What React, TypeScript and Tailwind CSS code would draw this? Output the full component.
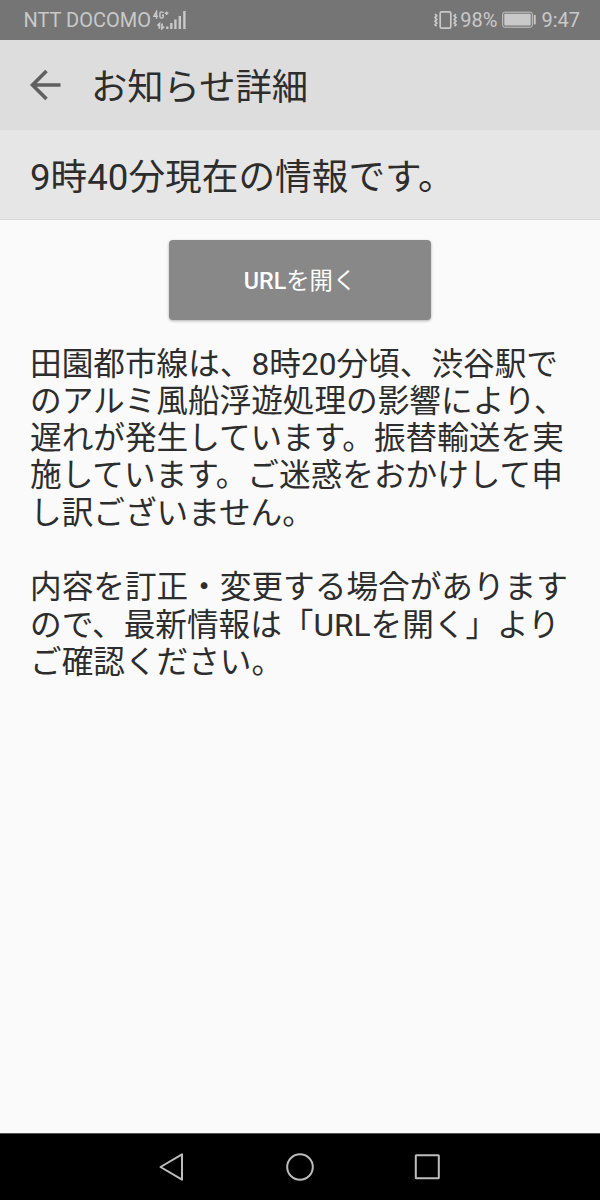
const DETAILS = [
  "田園都市線は、8時20分頃、渋谷駅で",
  "のアルミ風船浮遊処理の影響により、",
  "遅れが発生しています。振替輸送を実",
  "施しています。ご迷惑をおかけして申",
  "し訳ございません。",
  "",
  "内容を訂正・変更する場合があります",
  "ので、最新情報は「URLを開く」より",
  "ご確認ください。",
];

function SignalIcon() {
  return (
    <svg className="mt-px ml-[2.5px] h-[22px] w-[36px] shrink-0" viewBox="0 0 36 22" fill="none" stroke="#c9c9c9">
      <path d="M3.5 8.8V1.5L0.8 6.2H5M10.3 3.2C10.1 1.4 6.9 1.4 6.9 3.2V6.4C6.9 8.6 10.3 8.6 10.3 6.4V5.2H8.9M11.8 3.2H15.4M13.6 1.4V5" strokeWidth="1.4" />
      <path d="M6.4 18.8V13.8L4.4 15.6M9 13.6V18.4L11 16.6" strokeWidth="1.8" />
      <path d="M14.3 19V16.6M18.3 19V13M22.4 19V9.6M26.8 19V6M31.4 19V1" strokeWidth="2.4" />
    </svg>
  );
}

function VibrateIcon() {
  return (
    <svg className="h-[20px] w-[25px]" viewBox="0 0 25 20" fill="none" stroke="#c9c9c9">
      <rect x="7.2" y="1.8" width="10.6" height="16.4" rx="1.5" strokeWidth="1.7" />
      <path d="M2 4L3.8 5.8L2 7.6L3.8 9.4L2 11.2L3.8 13L2 14.8L3.6 16.2M23 4L21.2 5.8L23 7.6L21.2 9.4L23 11.2L21.2 13L23 14.8L21.4 16.2" strokeWidth="1.7" />
    </svg>
  );
}

function BatteryIcon() {
  return (
    <svg className="ml-[5px] h-[18px] w-[36px]" viewBox="0 0 36 18">
      <rect x="0.7" y="1.2" width="29.6" height="15" rx="2" fill="none" stroke="#c9c9c9" strokeWidth="1" />
      <rect x="2.3" y="2.8" width="26.4" height="11.8" rx="0.8" fill="#c9c9c9" />
      <rect x="31.8" y="4" width="1.9" height="9.4" rx="0.6" fill="#c9c9c9" />
    </svg>
  );
}

export default function App() {
  return (
    <div className="flex h-[1200px] w-[600px] flex-col overflow-hidden bg-[#fafafa] font-[Roboto,'Noto_Sans_CJK_JP',sans-serif] text-[#2d2d2d]" lang="ja">
      <header className="flex h-10 shrink-0 items-center bg-[#757575] pr-[20px] pl-[23.5px] text-[20px] text-[#c9c9c9]">
        <span className="whitespace-nowrap">NTT DOCOMO</span>
        <SignalIcon />
        <div className="ml-auto flex items-center whitespace-nowrap">
          <VibrateIcon />
          <span className="ml-[2.5px]">98%</span>
          <BatteryIcon />
          <span className="ml-[3px]">9:47</span>
        </div>
      </header>

      <div className="flex h-[90px] shrink-0 items-center bg-[#dddddd] pl-[29px]">
        <button aria-label="戻る">
          <svg className="h-8 w-8" viewBox="0 0 32 32" fill="none" stroke="#606060" strokeWidth="3.6">
            <path d="M31.5 16H3.4M17.5 2L3.5 16L17.5 30" />
          </svg>
        </button>
        <h1 className="ml-[30px] pt-[5px] text-[36.3px] leading-[54px] whitespace-nowrap">お知らせ詳細</h1>
      </div>

      <div className="flex h-[90px] shrink-0 items-center border-b border-[#d6d6d6] bg-[#e6e6e6] pl-[30px]">
        <h2 className="pt-[6px] text-[36.67px] leading-[54px] whitespace-nowrap">9時40分現在の情報です。</h2>
      </div>

      <main className="flex grow flex-col px-[30px] pt-5">
        <button className="h-[80px] w-[262px] self-center rounded-[4px] bg-[#888888] pt-[3px] text-[23.3px] font-medium text-white shadow-[0_1px_3px_rgba(0,0,0,0.3)]">
          URL<span className="font-normal">を開く</span>
        </button>
        <div className="mt-[25.6px] text-[31.65px] leading-[37.3px]">
          {DETAILS.map((line, i) => (
            <p key={i} className="h-[37.3px] whitespace-nowrap">{line}</p>
          ))}
        </div>
      </main>

      <nav className="flex h-[67px] shrink-0 items-center justify-center border-t border-[#555555] bg-black">
        <svg className="h-[66px] w-[320px]" viewBox="140 0 320 66" fill="none" stroke="#bdbdbd" strokeWidth="2" strokeLinejoin="round">
          <path d="M160.5 33L182 20.3V45.7Z" />
          <circle cx="300" cy="33" r="12.8" />
          <rect x="415.8" y="21.2" width="23" height="23" rx="0.5" />
        </svg>
      </nav>
    </div>
  );
}
